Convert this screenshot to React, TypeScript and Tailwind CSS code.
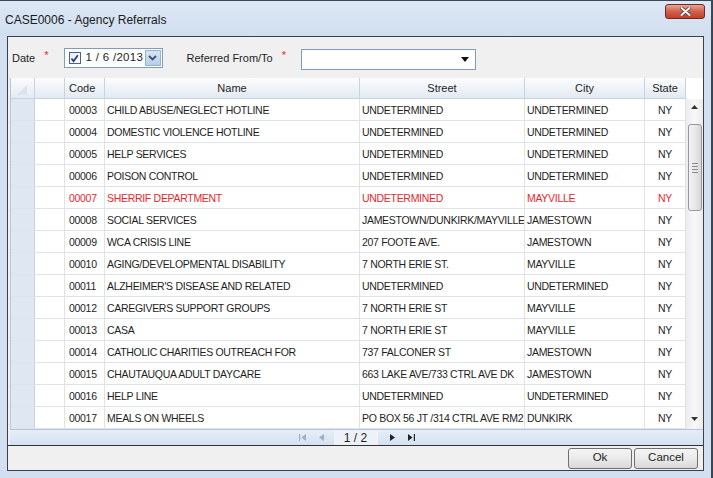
const rows: { code: string; name: string; street: string; city: string; red?: boolean }[] = [
  { code: '00003', name: 'CHILD ABUSE/NEGLECT HOTLINE', street: 'UNDETERMINED', city: 'UNDETERMINED' },
  { code: '00004', name: 'DOMESTIC VIOLENCE HOTLINE', street: 'UNDETERMINED', city: 'UNDETERMINED' },
  { code: '00005', name: 'HELP SERVICES', street: 'UNDETERMINED', city: 'UNDETERMINED' },
  { code: '00006', name: 'POISON CONTROL', street: 'UNDETERMINED', city: 'UNDETERMINED' },
  { code: '00007', name: 'SHERRIF DEPARTMENT', street: 'UNDETERMINED', city: 'MAYVILLE', red: true },
  { code: '00008', name: 'SOCIAL SERVICES', street: 'JAMESTOWN/DUNKIRK/MAYVILLE', city: 'JAMESTOWN' },
  { code: '00009', name: 'WCA CRISIS LINE', street: '207 FOOTE AVE.', city: 'JAMESTOWN' },
  { code: '00010', name: 'AGING/DEVELOPMENTAL DISABILITY', street: '7 NORTH ERIE ST.', city: 'MAYVILLE' },
  { code: '00011', name: "ALZHEIMER'S DISEASE AND RELATED", street: 'UNDETERMINED', city: 'UNDETERMINED' },
  { code: '00012', name: 'CAREGIVERS SUPPORT GROUPS', street: '7 NORTH ERIE ST', city: 'MAYVILLE' },
  { code: '00013', name: 'CASA', street: '7 NORTH ERIE ST', city: 'MAYVILLE' },
  { code: '00014', name: 'CATHOLIC CHARITIES OUTREACH FOR', street: '737 FALCONER ST', city: 'JAMESTOWN' },
  { code: '00015', name: 'CHAUTAUQUA ADULT DAYCARE', street: '663 LAKE AVE/733 CTRL AVE DK', city: 'JAMESTOWN' },
  { code: '00016', name: 'HELP LINE', street: 'UNDETERMINED', city: 'UNDETERMINED' },
  { code: '00017', name: 'MEALS ON WHEELS', street: 'PO BOX 56 JT /314 CTRL AVE RM2', city: 'DUNKIRK' },
]

const cols = 'grid grid-cols-[24px_30px_40px_255px_165px_120px_41px]'
const cell = 'overflow-hidden whitespace-nowrap border-r border-[#dfe3e8] text-[10.5px] tracking-[-0.3px] leading-[22px]'

const Asterisk = () => <span className="ml-[9px] -mt-[6px] text-[11px] text-[#e02a2a]">*</span>

const App = () => {
  return (
    <div className="w-[713px] h-[478px] flex flex-col bg-[#d2dff0] border-t border-r-2 border-[#3a4656] font-[family-name:'Liberation_Sans',Arial,sans-serif] text-[#1e1e1e] overflow-hidden">

      {/* title bar */}
      <div className="h-[35px] flex items-start justify-between bg-gradient-to-b from-[#dde8f5] to-[#d0deef] pl-[5px] pr-[6px]">
        <span className="mt-[10px] text-[12px] text-[#1b1b1b]">CASE0006 - Agency Referrals</span>
        <div className="mt-[3px] w-[40px] h-[15px] rounded-[3px] border border-[#6e2b22] bg-gradient-to-b from-[#e8a595] via-[#d0604b] to-[#c2402b] flex items-center justify-center">
          <svg width="11" height="9" viewBox="0 0 11 9">
            <path d="M1.5 1 L9.5 8 M9.5 1 L1.5 8" stroke="#5a2a22" strokeWidth="3.4" strokeLinecap="round" />
            <path d="M1.5 1 L9.5 8 M9.5 1 L1.5 8" stroke="#ffffff" strokeWidth="2" strokeLinecap="round" />
          </svg>
        </div>
      </div>

      {/* panel */}
      <div className="mx-[7px] mb-[7px] flex-1 flex flex-col border border-[#3c4048] bg-[#f0f0f0]">

        {/* filters */}
        <div className="h-[41px] flex items-center pl-[4px] pt-[1px] text-[11px]">
          <span>Date</span>
          <Asterisk />
          <div className="ml-[15px] w-[99px] h-[20px] flex items-center border border-[#7f9db9] bg-white">
            <div className="ml-[4px] w-[12px] h-[12px] border border-[#4d6185] bg-gradient-to-br from-[#e6ecf4] to-white flex items-center justify-center">
              <svg width="9" height="9" viewBox="0 0 9 9">
                <path d="M1.5 4.5 L3.6 7.2 L7.8 1.2" stroke="#1f3f8a" strokeWidth="1.8" fill="none" />
              </svg>
            </div>
            <span className="ml-[5px] text-[11.5px] tracking-[0.3px] whitespace-pre">1 / 6 /2013</span>
            <div className="ml-auto mr-[1px] w-[16px] h-[16px] bg-gradient-to-b from-[#d7e3f3] to-[#b9cde8] border border-[#98b0d3] flex items-center justify-center">
              <svg width="9" height="6" viewBox="0 0 9 6">
                <path d="M1 1 L4.5 4.5 L8 1" stroke="#3e4f73" strokeWidth="1.8" fill="none" />
              </svg>
            </div>
          </div>
          <span className="ml-[24px]">Referred From/To</span>
          <Asterisk />
          <div className="ml-[15px] mt-[2px] w-[175px] h-[21px] flex items-center justify-end border border-[#7f9db9] bg-white pr-[6px]">
            <svg width="8" height="5" viewBox="0 0 8 5"><path d="M0 0 H8 L4 5 Z" fill="#111" /></svg>
          </div>
        </div>

        {/* grid */}
        <div className="ml-[2px] flex">
          <div className="flex flex-col border-l border-[#b9c6d6]">
            <div className={`${cols} h-[21px] bg-gradient-to-b from-[#fbfcfe] to-[#e4eaf2] border-b border-[#c9d3df] text-[11px] leading-[20px]`}>
              <div className="border-r border-[#c9d3df] flex items-end justify-end pr-[7px] pb-[3px]">
                <svg width="10" height="10" viewBox="0 0 10 10"><path d="M10 0 L10 10 L0 10 Z" fill="#dde3ea" /></svg>
              </div>
              <div className="border-r border-[#c9d3df]" />
              <div className="border-r border-[#c9d3df] pl-[4px]">Code</div>
              <div className="border-r border-[#c9d3df] text-center">Name</div>
              <div className="border-r border-[#c9d3df] text-center">Street</div>
              <div className="border-r border-[#c9d3df] text-center">City</div>
              <div className="border-r border-[#c9d3df] text-center">State</div>
            </div>
            {rows.map((r) => (
              <div key={r.code} className={`${cols} h-[22px] border-b border-[#dfe3e8] bg-white ${r.red ? 'text-[#e8262d]' : ''}`}>
                <div className="bg-[#dfe7f2] border-r border-[#c9d3df]" />
                <div className="border-r border-[#dfe3e8]" />
                <div className={`${cell} pl-[4px]`}>{r.code}</div>
                <div className={`${cell} pl-[2px]`}>{r.name}</div>
                <div className={`${cell} pl-[2px]`}>{r.street}</div>
                <div className={`${cell} pl-[2px]`}>{r.city}</div>
                <div className={`${cell} text-center`}>NY</div>
              </div>
            ))}
          </div>

          {/* scrollbar */}
          <div className="w-[18px] flex flex-col bg-white">
            <div className="h-[21px]" />
            <div className="flex-1 flex flex-col items-center bg-gradient-to-r from-[#ececec] via-[#f8f8f8] to-[#ececec]">
              <svg className="mt-[6px]" width="7" height="4" viewBox="0 0 7 4"><path d="M0 4 L3.5 0 L7 4 Z" fill="#333" /></svg>
              <div className="mt-[15px] w-[14px] h-[87px] rounded-[3px] border border-[#979797] bg-gradient-to-r from-[#f3f3f3] via-[#e8e8e8] to-[#d6d6d6] flex flex-col items-center justify-center gap-[2px]">
                <div className="w-[6px] h-px bg-[#8a8a8a]" />
                <div className="w-[6px] h-px bg-[#8a8a8a]" />
                <div className="w-[6px] h-px bg-[#8a8a8a]" />
                <div className="w-[6px] h-px bg-[#8a8a8a]" />
              </div>
              <svg className="mt-auto mb-[8px]" width="7" height="4" viewBox="0 0 7 4"><path d="M0 0 L7 0 L3.5 4 Z" fill="#333" /></svg>
            </div>
          </div>
        </div>

        {/* pager */}
        <div className="ml-[2px] h-[16px] flex items-center justify-center border-t border-[#b3c5dc] bg-gradient-to-b from-[#e6eef8] to-[#d3e1f1] text-[11px]">
          <svg width="7" height="7" viewBox="0 0 7 7"><path d="M0 0 H1.2 V7 H0 Z M7 0 V7 L2.5 3.5 Z" fill="#9fb0c4" /></svg>
          <svg className="ml-[13px]" width="5" height="7" viewBox="0 0 5 7"><path d="M5 0 V7 L0 3.5 Z" fill="#9fb0c4" /></svg>
          <div className="ml-[10px] w-[44px] h-[15px] flex items-center justify-center bg-[#edf2f9] text-[12px]">1 / 2</div>
          <svg className="ml-[12px]" width="5" height="7" viewBox="0 0 5 7"><path d="M0 0 V7 L5 3.5 Z" fill="#222" /></svg>
          <svg className="ml-[13px]" width="7" height="7" viewBox="0 0 7 7"><path d="M0 0 V7 L4.5 3.5 Z M5.8 0 H7 V7 H5.8 Z" fill="#222" /></svg>
        </div>

        {/* buttons */}
        <div className="flex-1 flex items-center justify-end gap-[2px] pr-[5px] border-t border-[#2f3338] text-[11.5px]">
          <button className="w-[64px] h-[21px] rounded-[3px] border border-[#707070] bg-gradient-to-b from-[#f4f4f4] via-[#ebebeb] to-[#d8d8d8]">Ok</button>
          <button className="w-[64px] h-[21px] rounded-[3px] border border-[#707070] bg-gradient-to-b from-[#f4f4f4] via-[#ebebeb] to-[#d8d8d8]">Cancel</button>
        </div>
      </div>
    </div>
  )
}

export default App
